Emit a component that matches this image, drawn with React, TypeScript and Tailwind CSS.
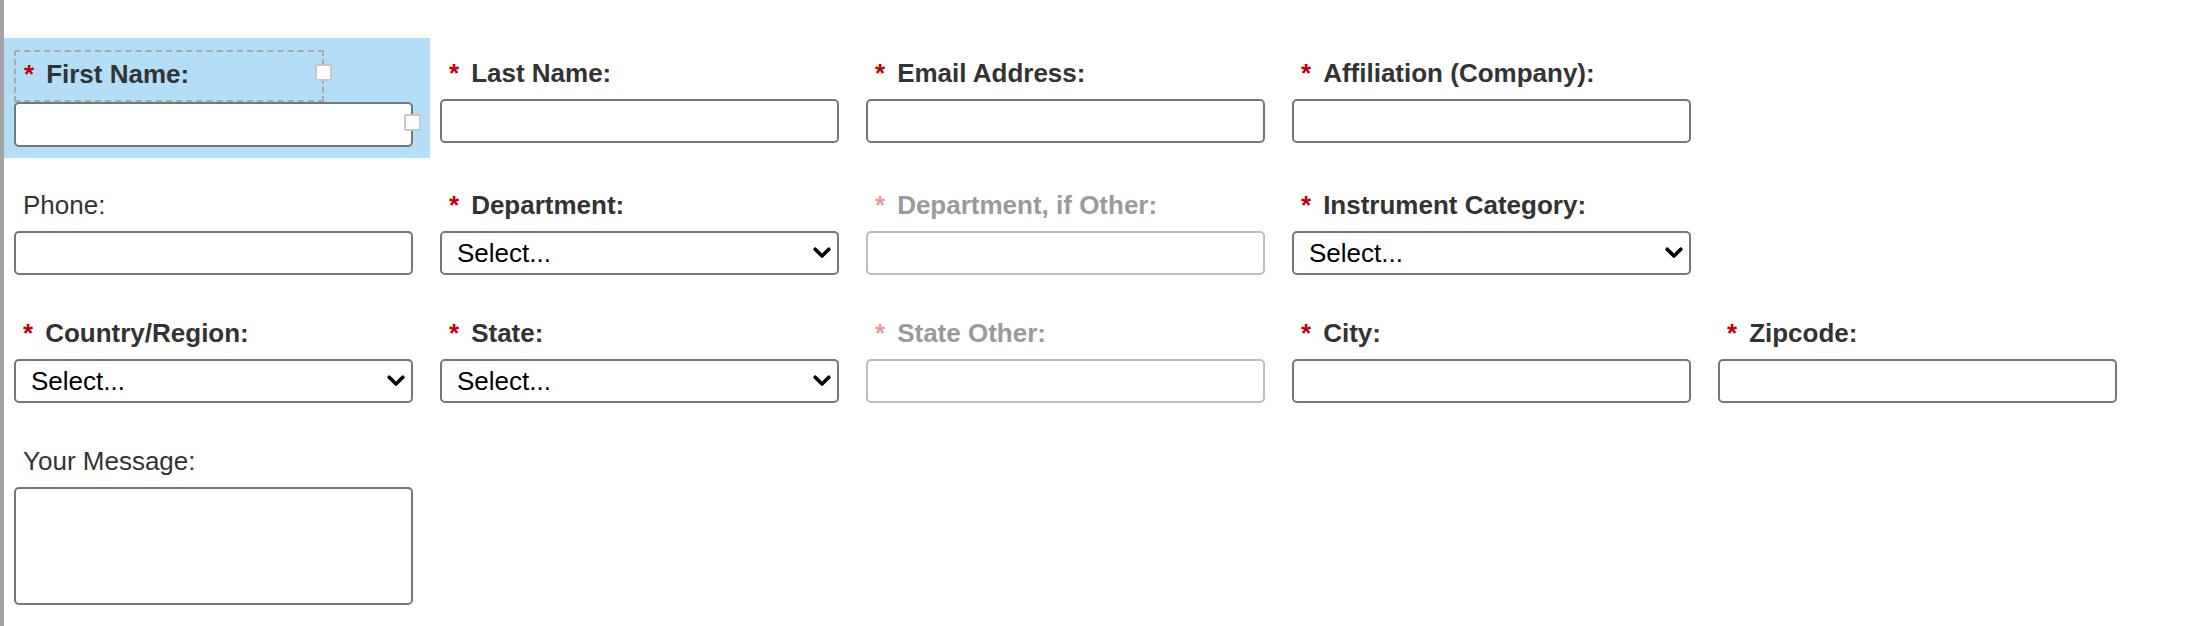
import React from "react";

const font = { fontFamily: '"Liberation Sans", Arial, Helvetica, sans-serif' };

function Label({
  text,
  required,
  disabled,
}: {
  text: string;
  required?: boolean;
  disabled?: boolean;
}) {
  return (
    <div
      className={`block h-[43px] pl-[9px] text-[26px] leading-[34px] whitespace-nowrap ${
        required ? "font-bold" : "font-normal"
      } ${disabled ? "text-[#9a9a9a]" : "text-[#333333]"}`}
    >
      {required && (
        <span className={`mr-[12px] ${disabled ? "text-[#e59a9a]" : "text-[#c00000]"}`}>*</span>
      )}
      {text}
    </div>
  );
}

function TextInput({ disabled }: { disabled?: boolean }) {
  return (
    <input
      type="text"
      disabled={disabled}
      className={`block w-[399px] h-[44px] rounded-[5px] border-2 bg-white outline-none ${
        disabled ? "border-[#bdbdbd]" : "border-[#767676]"
      }`}
    />
  );
}

function Chevron() {
  return (
    <svg width="18" height="12" viewBox="0 0 18 12" fill="none">
      <polyline
        points="2.2,2.2 9,9 15.8,2.2"
        stroke="#000"
        strokeWidth="3.6"
        strokeLinecap="round"
        strokeLinejoin="round"
      />
    </svg>
  );
}

function SelectInput() {
  return (
    <div className="relative w-[399px] h-[44px]">
      <select
        className="appearance-none block w-[399px] h-[44px] rounded-[5px] border-2 border-[#767676] bg-white pl-[15px] text-[26px] leading-[30px] text-black outline-none"
        style={font}
        defaultValue="select"
      >
        <option value="select">Select...</option>
      </select>
      <div className="pointer-events-none absolute right-[8px] top-[16px]">
        <Chevron />
      </div>
    </div>
  );
}

function Field({
  label,
  required,
  disabled,
  kind = "text",
}: {
  label: string;
  required?: boolean;
  disabled?: boolean;
  kind?: "text" | "select";
}) {
  return (
    <div>
      <Label text={label} required={required} disabled={disabled} />
      {kind === "select" ? <SelectInput /> : <TextInput disabled={disabled} />}
    </div>
  );
}

function Handle({ className }: { className: string }) {
  return (
    <div
      className={`absolute w-[17px] h-[17px] bg-white border-2 border-[#c8c8c8] rounded-[2px] ${className}`}
    />
  );
}

function FirstNameField() {
  return (
    <div className="relative mt-[-6px]">
      <div className="absolute left-[-10px] top-[-12px] w-[426px] h-[120px] bg-[#b3def5]" />
      <div className="relative">
        <div className="relative w-[310px] h-[52px] border-2 border-dashed border-[#a8a8a8] pl-[8px] pt-[5px] text-[26px] leading-[34px] font-bold text-[#333333] whitespace-nowrap">
          <span className="mr-[12px] text-[#c00000]">*</span>
          First Name:
          <Handle className="right-[-10px] top-[12px]" />
        </div>
        <div className="relative">
          <input
            type="text"
            className="block w-[399px] h-[45px] rounded-[5px] border-2 border-[#767676] bg-white outline-none"
          />
          <Handle className="right-[-8px] top-[12px]" />
        </div>
      </div>
    </div>
  );
}

export default function App() {
  return (
    <div className="min-h-[626px] w-[2200px] bg-white border-l-4 border-[#a2a2a7]" style={font}>
      <div className="grid grid-cols-[repeat(5,399px)] gap-x-[27px] gap-y-[41px] pl-[10px] pt-[56px]">
        <FirstNameField />
        <Field label="Last Name:" required />
        <Field label="Email Address:" required />
        <Field label="Affiliation (Company):" required />
        <div />

        <Field label="Phone:" />
        <Field label="Department:" required kind="select" />
        <Field label="Department, if Other:" required disabled />
        <Field label="Instrument Category:" required kind="select" />
        <div />

        <Field label="Country/Region:" required kind="select" />
        <Field label="State:" required kind="select" />
        <Field label="State Other:" required disabled />
        <Field label="City:" required />
        <Field label="Zipcode:" required />

        <div>
          <Label text="Your Message:" />
          <textarea className="block w-[399px] h-[118px] rounded-[5px] border-2 border-[#767676] bg-white outline-none resize-none" />
        </div>
      </div>
    </div>
  );
}
